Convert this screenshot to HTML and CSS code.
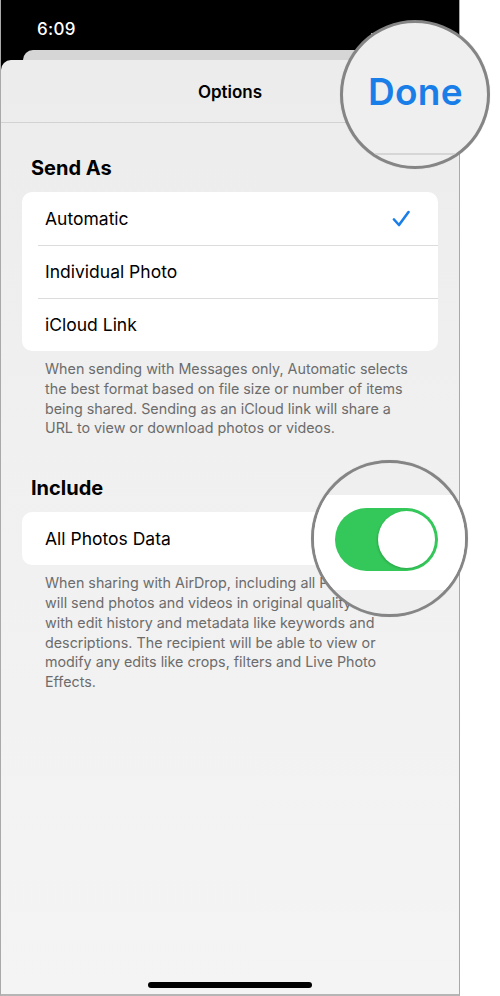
FILE: index.html
```html
<!DOCTYPE html>
<html>
<head>
<meta charset="utf-8">
<link rel="stylesheet" href="styles.css">
</head>
<body>
<div class="phone">
  <div class="status">
    <span class="time">6:09</span>
    <span class="signal"><i class="b1"></i><i class="b2"></i><i class="b3"></i><i class="b4"></i></span>
  </div>
  <div class="backcard"></div>
  <div class="sheet">
    <div class="navbar">Options</div>
    <div class="content">
      <h2 class="sec-title">Send As</h2>
      <div class="card">
        <div class="row"><span>Automatic</span>
          <svg class="check" width="18" height="17" viewBox="0 0 18 17"><path d="M2 9.5 L7 15 L16.5 2" fill="none" stroke="#1a7ee8" stroke-width="2.6" stroke-linecap="round" stroke-linejoin="round"/></svg>
        </div>
        <div class="row"><span>Individual Photo</span></div>
        <div class="row"><span>iCloud Link</span></div>
      </div>
      <p class="foot">When sending with Messages only, Automatic selects the best format based on file size or number of items being shared. Sending as an iCloud link will share a URL to view or download photos or videos.</p>
      <h2 class="sec-title sec-second">Include</h2>
      <div class="card">
        <div class="row"><span>All Photos Data</span></div>
      </div>
      <p class="foot">When sharing with AirDrop, including all Photos Data will send photos and videos in original quality along with edit history and metadata like keywords and descriptions. The recipient will be able to view or modify any edits like crops, filters and Live Photo Effects.</p>
    </div>
    <div class="home"></div>
  </div>
</div>

<div class="lens lens-done">
  <div class="lens-line"></div>
  <span class="done">Done</span>
</div>

<div class="lens lens-toggle">
  <div class="lens-card">
    <div class="toggle"><div class="knob"></div></div>
  </div>
</div>
</body>
</html>
```
FILE: styles.css
```css
* { box-sizing: border-box; }
html, body { margin: 0; padding: 0; }
body {
  width: 500px;
  height: 996px;
  background: #ffffff;
  position: relative;
  overflow: hidden;
  font-family: Inter, "Liberation Sans", sans-serif;
}
.phone {
  width: 460px;
  height: 996px;
  border: 1px solid #a9a9a9;
  border-top: none;
  border-bottom: 2px solid #b5b5b5;
  background: #000;
  display: flex;
  flex-direction: column;
  overflow: hidden;
}
.status {
  height: 50px;
  flex: none;
  display: flex;
  align-items: flex-start;
  justify-content: space-between;
  padding: 18px 0 0 36px;
}
.time {
  color: #fff;
  font-size: 17px;
  font-weight: 500;
  letter-spacing: 0.3px;
  line-height: 22px;
}
.signal {
  display: flex;
  align-items: flex-end;
  gap: 2px;
  margin: 10px 70px 0 0;
  height: 9px;
}
.signal i { display: block; width: 3px; background: #fff; border-radius: 1px; }
.signal .b1 { height: 4px; }
.signal .b2 { height: 6px; }
.signal .b3 { height: 8px; background: #888; }
.signal .b4 { height: 9px; background: #555; }
.backcard {
  flex: none;
  height: 20px;
  margin: 0 22px -10px 22px;
  background: #d6d6d6;
  border-radius: 10px 10px 0 0;
}
.sheet {
  position: relative;
  flex: 1;
  background: linear-gradient(#ececec, #f0f0f0 40%, #f4f4f4);
  border-radius: 10px 10px 0 0;
  display: flex;
  flex-direction: column;
}
.navbar {
  height: 63px;
  flex: none;
  border-bottom: 1px solid #d2d2d2;
  display: flex;
  align-items: center;
  justify-content: center;
  font-size: 17px;
  font-weight: 600;
  color: #000;
  padding-top: 2px;
}
.content {
  padding: 33px 21px 0 21px;
  flex: 1;
}
.sec-title {
  margin: 0 0 12px 9px;
  font-size: 20px;
  line-height: 24px;
  font-weight: 700;
  color: #000;
}
.sec-second { margin-top: 38px; }
.card {
  background: #fff;
  border-radius: 10px;
  overflow: hidden;
}
.row {
  height: 53px;
  display: flex;
  align-items: center;
  justify-content: space-between;
  padding: 0 28px 0 23px;
  font-size: 17.5px;
  color: #000;
  position: relative;
}
.row + .row::before {
  content: "";
  position: absolute;
  top: 0;
  left: 16px;
  right: 0;
  height: 1px;
  background: #dcdcdc;
}
.check { display: block; }
.foot {
  margin: 8px 0 0 0;
  padding: 0 22px 0 23px;
  font-size: 14.3px;
  line-height: 19.8px;
  color: #6c6c6c;
}
.home {
  position: absolute;
  left: 147px;
  bottom: 6px;
  width: 164px;
  height: 6px;
  border-radius: 3px;
  background: #000;
}
.lens {
  position: absolute;
  border-radius: 50%;
  border: 3px solid #858585;
  overflow: hidden;
  background: #efefef;
  box-shadow: 0 0 1px rgba(0,0,0,0.2);
}
.lens-done {
  left: 340px;
  top: 20px;
  width: 150px;
  height: 149px;
}
.lens-line {
  position: absolute;
  left: 0;
  right: 0;
  top: 130px;
  height: 2px;
  background: #d6d6d6;
}
.done {
  position: absolute;
  left: 25px;
  top: 47px;
  font-size: 37px;
  font-weight: 600;
  letter-spacing: 0.3px;
  color: #1a7ee8;
  line-height: 44px;
}
.lens-toggle {
  left: 311px;
  top: 460px;
  width: 157px;
  height: 157px;
}
.lens-card {
  position: absolute;
  left: 0;
  right: 0;
  top: 32px;
  height: 95px;
  background: #fff;
}
.toggle {
  position: absolute;
  left: 21px;
  top: 13px;
  width: 103px;
  height: 63px;
  border-radius: 32px;
  background: #34c759;
}
.knob {
  position: absolute;
  right: 3px;
  top: 3px;
  width: 57px;
  height: 57px;
  border-radius: 50%;
  background: #fff;
  box-shadow: -1px 1px 2px rgba(0,0,0,0.15);
}
```
